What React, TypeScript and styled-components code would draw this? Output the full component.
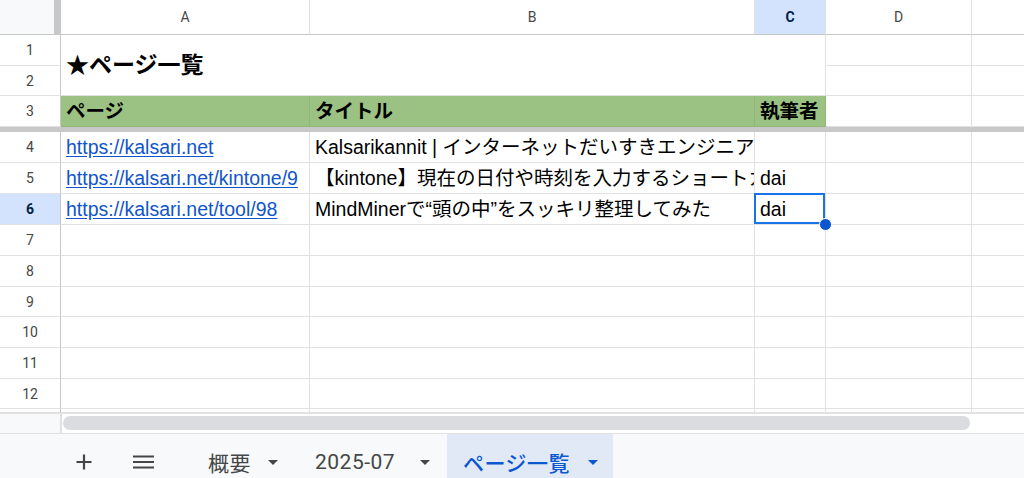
import React from 'react';
import styled, { createGlobalStyle } from 'styled-components';

const GlobalStyle = createGlobalStyle`
  html, body {
    margin: 0;
    padding: 0;
    background: #fff;
  }
  body {
    font-family: "Liberation Sans", Arial, "Noto Sans CJK JP", sans-serif;
    overflow: hidden;
  }
  * {
    box-sizing: border-box;
  }
`;

const Page = styled.div`
  width: 1024px;
  height: 478px;
  display: flex;
  flex-direction: column;
  overflow: hidden;
`;

const Sheet = styled.div`
  display: grid;
  grid-template-columns: 61px 249px 445px 71px 146px 1fr;
  grid-template-rows: 35px 31px 30px 31px 5px 31px 31px 31px 31px 31px 30px 31px 31px 30px 4px;
`;

const Corner = styled.div`
  background: #f8f9fa;
  border-right: 7px solid #c8c8c8;
  border-bottom: 1px solid #c4c7c5;
`;

const ColHead = styled.div<{ $active?: boolean; $last?: boolean }>`
  display: flex;
  align-items: center;
  justify-content: center;
  font-family: Roboto, "Liberation Sans", sans-serif;
  font-size: 14px;
  color: ${(p) => (p.$active ? '#041e49' : '#444746')};
  font-weight: ${(p) => (p.$active ? 700 : 400)};
  background: ${(p) => (p.$active ? '#d3e3fd' : '#fff')};
  border-right: ${(p) => (p.$last ? 'none' : '1px solid #e1e1e1')};
  border-bottom: 1px solid #c4c7c5;
`;

const RowHead = styled.div<{ $active?: boolean }>`
  display: flex;
  align-items: center;
  justify-content: center;
  font-family: Roboto, "Liberation Sans", sans-serif;
  font-size: 14px;
  color: ${(p) => (p.$active ? '#041e49' : '#444746')};
  font-weight: ${(p) => (p.$active ? 700 : 400)};
  background: ${(p) => (p.$active ? '#d3e3fd' : '#fff')};
  border-right: 1px solid #c4c7c5;
  border-bottom: 1px solid #e1e1e1;
`;

const Cell = styled.div<{ $green?: boolean; $bold?: boolean; $last?: boolean }>`
  display: flex;
  align-items: center;
  padding: 0 5px;
  font-size: 19.5px;
  line-height: 22px;
  white-space: nowrap;
  overflow: hidden;
  color: #000;
  font-weight: ${(p) => (p.$bold ? 700 : 400)};
  background: ${(p) => (p.$green ? '#9bc283' : '#fff')};
  border-right: ${(p) =>
    p.$last ? 'none' : p.$green ? '1px solid #8fb877' : '1px solid #e1e1e1'};
  border-bottom: 1px solid ${(p) => (p.$green ? '#8fb877' : '#e1e1e1')};
`;

const TitleCell = styled.div`
  grid-column: span 3;
  grid-row: span 2;
  display: flex;
  align-items: center;
  padding: 0 5px 4px;
  font-size: 23px;
  font-weight: 700;
  white-space: nowrap;
  border-right: 1px solid #e1e1e1;
  border-bottom: 1px solid #e1e1e1;
`;

const FreezeBar = styled.div`
  grid-column: 1 / -1;
  background: #c8c8c8;
`;

const SelectedCell = styled(Cell)`
  position: relative;
  overflow: visible;
  z-index: 2;
  &::after {
    content: '';
    position: absolute;
    top: -1px;
    left: -1px;
    right: 0;
    bottom: 0;
    border: 2px solid #1a73e8;
    pointer-events: none;
  }
`;

const FillHandle = styled.span`
  position: absolute;
  right: -7px;
  bottom: -7px;
  width: 13px;
  height: 13px;
  border-radius: 50%;
  background: #0b57d0;
  border: 1px solid #fff;
  z-index: 3;
`;

const Link = styled.a`
  color: #1155cc;
  text-decoration: underline;
  text-underline-offset: 2px;
`;

const ScrollRow = styled.div`
  display: flex;
  height: 20px;
  border-top: 1px solid #e1e1e1;
`;

const ScrollCorner = styled.div`
  width: 62px;
  background: #f8f9fa;
  border-right: 2px solid #e1e1e1;
`;

const Track = styled.div`
  flex: 1;
  padding: 2px 0 0 1px;
`;

const Thumb = styled.div`
  width: 907px;
  height: 14px;
  border-radius: 7px;
  background: #dadce0;
`;

const TabBar = styled.div`
  display: flex;
  height: 45px;
  border-top: 1px solid #e1e1e1;
  background: #f8f9fa;
  padding-left: 64px;
`;

const IconButton = styled.div<{ $offset?: number }>`
  width: 40px;
  display: flex;
  align-items: center;
  justify-content: center;
  padding-top: 12px;
  margin-left: ${(p) => p.$offset ?? 0}px;
  color: #444746;
`;

const Tab = styled.div<{ $active?: boolean; $offset?: number; $width: number }>`
  display: flex;
  align-items: center;
  justify-content: space-between;
  width: ${(p) => p.$width}px;
  padding: 12px 15px 0 16px;
  margin-left: ${(p) => p.$offset ?? 0}px;
  font-family: Roboto, "Noto Sans CJK JP", sans-serif;
  font-size: 21px;
  letter-spacing: 0.5px;
  font-weight: ${(p) => (p.$active ? 500 : 400)};
  color: ${(p) => (p.$active ? '#0b57d0' : '#444746')};
  background: ${(p) => (p.$active ? '#e1e9f7' : 'transparent')};
`;

const Caret = ({ color }: { color: string }) => (
  <svg width="10" height="5" viewBox="0 0 10 5">
    <path d="M0 0 L10 0 L5 5 Z" fill={color} />
  </svg>
);

const PlusIcon = () => (
  <svg width="16" height="16" viewBox="0 0 16 16">
    <path d="M8 0.5 V15.5 M0.5 8 H15.5" stroke="#444746" strokeWidth="2.2" fill="none" />
  </svg>
);

const MenuIcon = () => (
  <svg width="21" height="14" viewBox="0 0 21 14">
    <path d="M0 1.5 H21 M0 7 H21 M0 12.5 H21" stroke="#444746" strokeWidth="2" fill="none" />
  </svg>
);

interface RowData {
  n: number;
  url?: string;
  title?: string;
  author?: string;
  selected?: boolean;
}

const rows: RowData[] = [
  { n: 4, url: 'https://kalsari.net', title: 'Kalsarikannit | インターネットだいすきエンジニア' },
  {
    n: 5,
    url: 'https://kalsari.net/kintone/9',
    title: '【kintone】現在の日付や時刻を入力するショートカット',
    author: 'dai',
  },
  {
    n: 6,
    url: 'https://kalsari.net/tool/98',
    title: 'MindMinerで“頭の中”をスッキリ整理してみた',
    author: 'dai',
    selected: true,
  },
  { n: 7 },
  { n: 8 },
  { n: 9 },
  { n: 10 },
  { n: 11 },
  { n: 12 },
  { n: 13 },
];

const App = () => {
  return (
    <Page>
      <GlobalStyle />
      <Sheet>
        <Corner />
        <ColHead>A</ColHead>
        <ColHead>B</ColHead>
        <ColHead $active>C</ColHead>
        <ColHead>D</ColHead>
        <ColHead $last />

        <RowHead>1</RowHead>
        <TitleCell>★ページ一覧</TitleCell>
        <Cell />
        <Cell $last />
        <RowHead>2</RowHead>
        <Cell />
        <Cell $last />

        <RowHead>3</RowHead>
        <Cell $green $bold>ページ</Cell>
        <Cell $green $bold>タイトル</Cell>
        <Cell $green $bold>執筆者</Cell>
        <Cell />
        <Cell $last />

        <FreezeBar />

        {rows.map((r) => (
          <React.Fragment key={r.n}>
            <RowHead $active={r.selected}>{r.n === 13 ? '' : r.n}</RowHead>
            <Cell>{r.url && <Link>{r.url}</Link>}</Cell>
            <Cell>{r.title}</Cell>
            {r.selected ? (
              <SelectedCell>
                {r.author}
                <FillHandle />
              </SelectedCell>
            ) : (
              <Cell>{r.author}</Cell>
            )}
            <Cell />
            <Cell $last />
          </React.Fragment>
        ))}
      </Sheet>

      <ScrollRow>
        <ScrollCorner />
        <Track>
          <Thumb />
        </Track>
      </ScrollRow>

      <TabBar>
        <IconButton>
          <PlusIcon />
        </IconButton>
        <IconButton $offset={19}>
          <MenuIcon />
        </IconButton>
        <Tab $offset={29} $width={101}>
          <span>概要</span>
          <Caret color="#444746" />
        </Tab>
        <Tab $offset={6} $width={146}>
          <span>2025-07</span>
          <Caret color="#444746" />
        </Tab>
        <Tab $active $offset={2} $width={166}>
          <span>ページ一覧</span>
          <Caret color="#0b57d0" />
        </Tab>
      </TabBar>
    </Page>
  );
};

export default App;
